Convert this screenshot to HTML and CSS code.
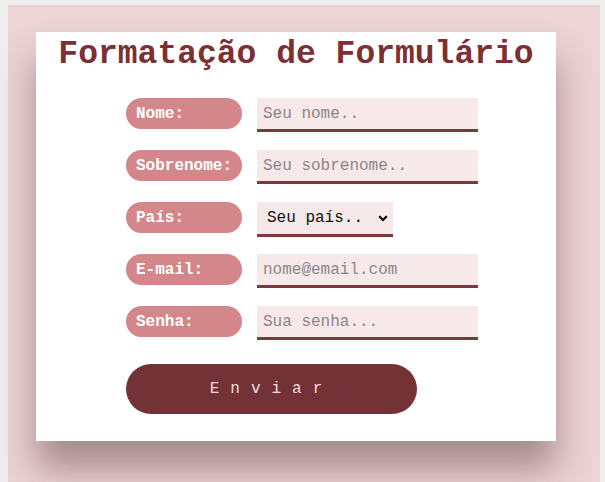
FILE: index.html
```html
<!DOCTYPE html>
<html lang="pt">
<head>
<meta charset="utf-8">
<title>Formatação de Formulário</title>
<link rel="stylesheet" href="styles.css">
</head>
<body>
<div class="page">
  <div class="card">
    <h1 class="title">Formatação de Formulário</h1>
    <form class="form">
      <div class="row">
        <label class="tag" for="nome">Nome:</label>
        <input class="field" id="nome" type="text" placeholder="Seu nome..">
      </div>
      <div class="row">
        <label class="tag" for="sobrenome">Sobrenome:</label>
        <input class="field" id="sobrenome" type="text" placeholder="Seu sobrenome..">
      </div>
      <div class="row">
        <label class="tag" for="pais">País:</label>
        <select class="choice" id="pais">
          <option>Seu país..</option>
        </select>
      </div>
      <div class="row">
        <label class="tag" for="email">E-mail:</label>
        <input class="field" id="email" type="email" placeholder="nome@email.com">
      </div>
      <div class="row">
        <label class="tag" for="senha">Senha:</label>
        <input class="field" id="senha" type="password" placeholder="Sua senha...">
      </div>
      <button class="send" type="button">Enviar</button>
    </form>
  </div>
</div>
</body>
</html>
```
FILE: styles.css
```css
html, body {
  height: 100%;
}
body {
  margin: 0;
  padding: 5px 5px 0 8px;
  box-sizing: border-box;
  background: #eeeeee;
  font-family: "Courier New", "Nimbus Mono PS", "Nimbus Mono L", FreeMono, Courier, "Liberation Mono", monospace;
  overflow: hidden;
}
.page {
  background: #ecd3d5;
  height: 100%;
  padding: 27px 44px 0 28px;
  box-sizing: border-box;
}
.card {
  width: 520px;
  box-sizing: border-box;
  background: #ffffff;
  padding: 4px 0 27px 90px;
  box-shadow: 0 28px 34px rgba(70, 40, 42, 0.42);
}
.title {
  margin: 0 0 24px -90px;
  font-size: 33px;
  line-height: 38px;
  font-weight: bold;
  color: #7a3034;
  text-align: center;
}
.form {
  display: flex;
  flex-direction: column;
  gap: 19px;
  margin: 0;
}
.row {
  display: flex;
  align-items: flex-start;
  gap: 15px;
  height: 33px;
}
.tag {
  width: 116px;
  height: 31px;
  box-sizing: border-box;
  border-radius: 16px;
  background: #d4878a;
  color: #ffffff;
  font-weight: bold;
  font-size: 16px;
  line-height: 32px;
  padding-left: 10px;
}
.field,
.choice,
.send {
  font-family: "Courier New", "Nimbus Mono PS", "Nimbus Mono L", FreeMono, Courier, "Liberation Mono", monospace;
}
.field {
  width: 221px;
  height: 34px;
  box-sizing: border-box;
  margin: 0;
  border: 0;
  border-bottom: 3px solid #7b3a3d;
  background: #f7e9e9;
  font-size: 16px;
  padding: 0 6px;
  color: #222;
  outline: none;
}
.field::placeholder {
  color: #8c8585;
}
.choice {
  -webkit-appearance: none;
  appearance: none;
  width: 136px;
  height: 35px;
  box-sizing: border-box;
  margin: 0;
  border: 0;
  border-radius: 0;
  border-bottom: 3px solid #7b3a3d;
  background-color: #f7e9e9;
  background-image: url("data:image/svg+xml;utf8,<svg xmlns='http://www.w3.org/2000/svg' width='10' height='7' viewBox='0 0 10 7'><path d='M1.2 1.2 L5 5 L8.8 1.2' fill='none' stroke='black' stroke-width='2.2'/></svg>");
  background-repeat: no-repeat;
  background-position: right 5px center;
  font-size: 16px;
  color: #111;
  padding: 0 0 0 10px;
}
.send {
  margin-top: 6px;
  width: 291px;
  height: 50px;
  border: 0;
  border-radius: 25px;
  background: #733235;
  color: #f3dcdc;
  font-size: 16px;
  letter-spacing: 11px;
  padding: 0;
  cursor: pointer;
}
```
